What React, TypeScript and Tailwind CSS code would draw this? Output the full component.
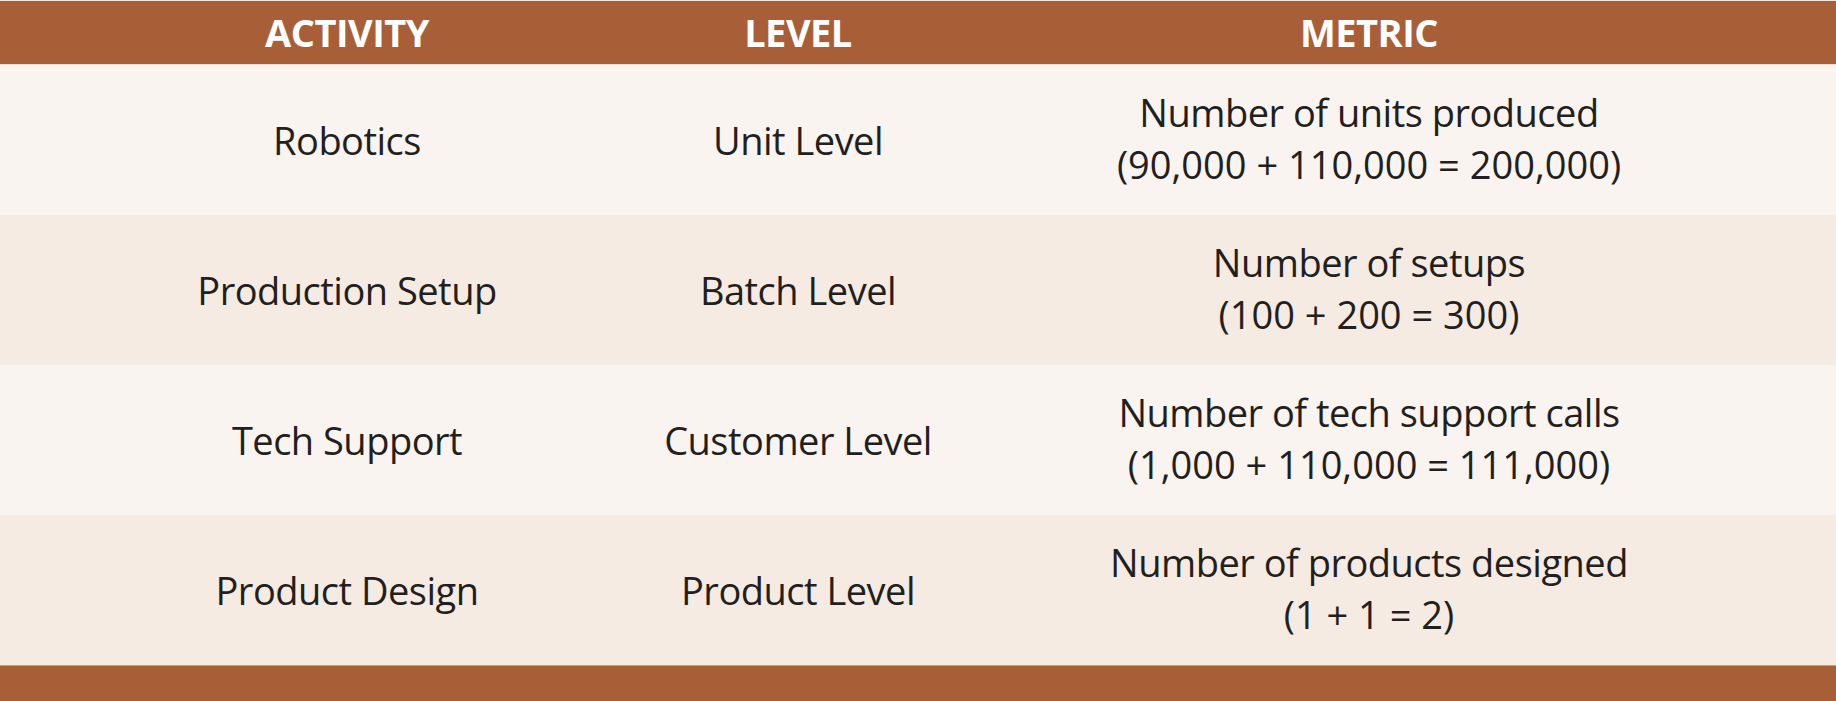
import React from "react";

const rows = [
  { activity: "Robotics", level: "Unit Level", metric: ["Number of units produced", "(90,000 + 110,000 = 200,000)"] },
  { activity: "Production Setup", level: "Batch Level", metric: ["Number of setups", "(100 + 200 = 300)"] },
  { activity: "Tech Support", level: "Customer Level", metric: ["Number of tech support calls", "(1,000 + 110,000 = 111,000)"] },
  { activity: "Product Design", level: "Product Level", metric: ["Number of products designed", "(1 + 1 = 2)"] },
];

export default function App() {
  return (
    <div
      className="w-[1836px] h-[701px] bg-[#f9f4f0] flex flex-col overflow-hidden text-[#231f20]"
      style={{ fontFamily: '"Open Sans", "Noto Sans", sans-serif' }}
    >
      <div className="h-px bg-[#f4e4da]" />
      <div className="h-[64px] bg-[#a85e36] grid grid-cols-[694px_208px_1fr] items-center text-white font-bold text-[38px] tracking-[-0.5px] border-b border-[#f3dccd]">
        <div className="flex justify-center">ACTIVITY</div>
        <div className="flex justify-center">LEVEL</div>
        <div className="flex justify-center">METRIC</div>
      </div>
      {rows.map((r, i) => (
        <div
          key={r.activity}
          className={`h-[150px] grid grid-cols-[694px_208px_1fr] items-center text-[38px] tracking-[-0.5px] ${
            i % 2 === 0 ? "bg-[#f9f4f0]" : "bg-[#f5ebe3]"
          }`}
        >
          <div className="flex justify-center whitespace-nowrap">{r.activity}</div>
          <div className="flex justify-center whitespace-nowrap">{r.level}</div>
          <div className="flex flex-col items-center whitespace-nowrap leading-[52px] -translate-y-[2px]">
            <span>{r.metric[0]}</span>
            <span className="tracking-normal">{r.metric[1]}</span>
          </div>
        </div>
      ))}
      <div className="flex-1 bg-[#a85e36] border-t border-[#c89a80]" />
    </div>
  );
}
